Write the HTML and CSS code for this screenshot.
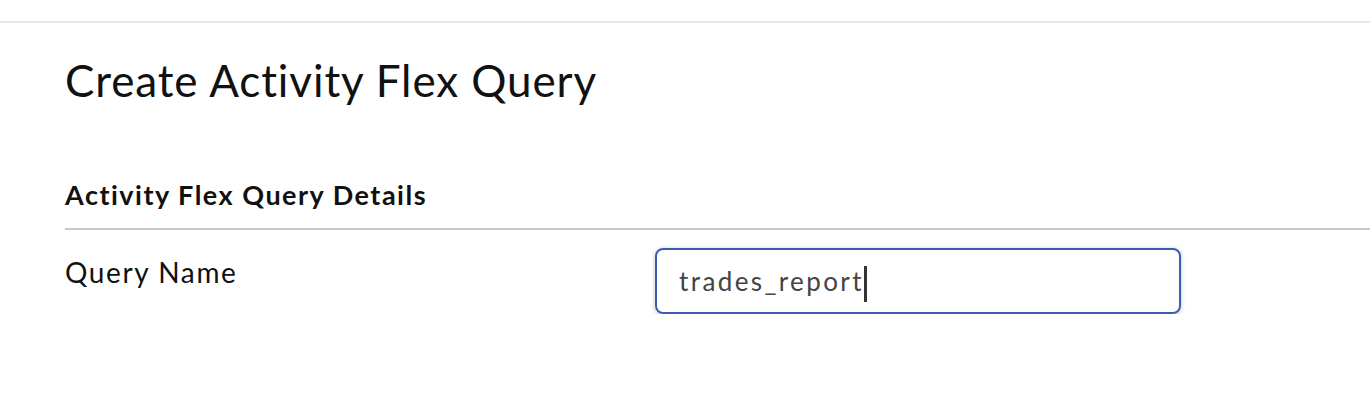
FILE: index.html
```html
<!DOCTYPE html>
<html lang="en">
<head>
  <meta charset="UTF-8">
  <meta name="viewport" content="width=device-width, initial-scale=1.0">
  <title>Create Activity Flex Query</title>
  <link rel="stylesheet" href="styles.css">
</head>
<body>
  <div class="topbar"></div>

  <div class="page">
    <h1 class="page-title">Create Activity Flex Query</h1>

    <section class="panel">
      <h3 class="panel-title">Activity Flex Query Details</h3>

      <div class="form-row">
        <label for="queryName" class="form-label">Query Name</label>
        <div class="field">
          <span class="field-value">trades_report</span><span class="caret"></span>
        </div>
      </div>
    </section>
  </div>
</body>
</html>
```

FILE: styles.css
```css
:root {
  --text-color: #111111;
  --input-text: #444444;
  --focus-blue: #3a5db3;
  --rule-light: #e6e6e6;
  --rule-dark: #c9c9c9;
}
body {
  font-family: Lato, "Open Sans", sans-serif;
  color: var(--text-color);
  background: #ffffff;
  margin: 0;
}
.topbar {
  height: 21px;
  border-bottom: 2px solid var(--rule-light);
}
.page {
  padding-left: 65px;
}
.page-title {
  font-size: 44px;
  font-weight: 400;
  letter-spacing: 0.9px;
  margin: 0;
  padding-top: 31px;
  line-height: 52px;
}
.panel {
  margin-top: 73px;
}
.panel-title {
  font-size: 27px;
  font-weight: 700;
  letter-spacing: 1.5px;
  margin: 0;
  line-height: 32px;
  padding-bottom: 17px;
  border-bottom: 2px solid var(--rule-dark);
}
.form-row {
  display: flex;
  align-items: flex-start;
  padding-top: 18px;
}
.form-label {
  width: 590px;
  font-size: 28px;
  letter-spacing: 1.6px;
  line-height: 32px;
  padding-top: 8px;
}
.field {
  width: 500px;
  height: 62px;
  border: 2px solid var(--focus-blue);
  border-radius: 8px;
  box-shadow: 0 1px 4px rgba(0, 0, 0, 0.25);
  display: flex;
  align-items: center;
  padding-left: 22px;
}
.field-value {
  font-size: 26px;
  letter-spacing: 2.4px;
  color: var(--input-text);
}
.caret {
  display: inline-block;
  width: 3px;
  height: 36px;
  background: #333333;
  margin-top: 6px;
}
```
